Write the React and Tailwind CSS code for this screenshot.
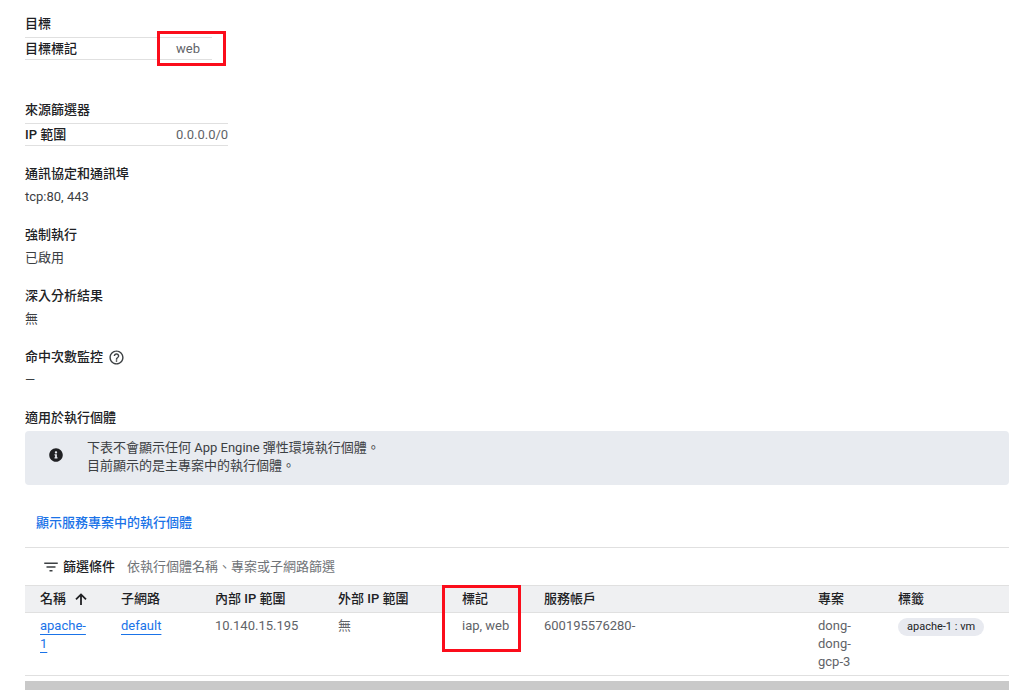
import React from "react";
import { MdHelpOutline, MdFilterList } from "react-icons/md";
import { FaInfoCircle } from "react-icons/fa";

function PropertyTable({ title, label, value, width, highlighted }) {
  return (
    <section>
      <h2 className="font-medium">{title}</h2>
      <table className={`${width} mt-1 table-fixed border-y border-[#e0e0e0]`}>
        <tbody>
          <tr>
            <th scope="row" className="h-[22px] w-[151px] p-0 text-left font-medium">
              {label}
            </th>
            <td className="relative p-0 text-[#5f6368]">
              {value}
              {highlighted && (
                <span className="absolute -top-[7px] -left-[19px] h-[35px] w-[69px] border-3 border-[#fb0d1b]" />
              )}
            </td>
          </tr>
        </tbody>
      </table>
    </section>
  );
}

function Field({ title, value, help }) {
  return (
    <div>
      <dt className="flex items-center font-medium">
        {title}
        {help && (
          <button type="button" aria-label="說明" className="ml-[5px] text-[#3c4043]">
            <MdHelpOutline size={17} />
          </button>
        )}
      </dt>
      <dd className="mt-[5px] text-[#3c4043]">{value}</dd>
    </div>
  );
}

function SortArrow() {
  return (
    <svg
      aria-hidden="true"
      className="h-3 w-3"
      viewBox="0 0 12 12"
      fill="none"
      stroke="currentColor"
      strokeWidth="1.8"
    >
      <path d="M6 12V1.4M1 6.4 6 1.4l5 5" />
    </svg>
  );
}

const columns = [
  { title: "名稱", width: "w-[81px]", sorted: true },
  { title: "子網路", width: "w-[94px]" },
  { title: "內部 IP 範圍", width: "w-[123px]" },
  { title: "外部 IP 範圍", width: "w-[124px]" },
  { title: "標記", width: "w-[82px]", highlighted: true },
  { title: "服務帳戶", width: "w-auto" },
  { title: "專案", width: "w-[80px]" },
  { title: "標籤", width: "w-[126px]" },
];

const linkStyle = "text-[#1a73e8] underline decoration-1 underline-offset-4";

function InstancesTable() {
  return (
    <table className="w-full table-fixed text-left">
      <thead>
        <tr className="h-[27px] border-y border-[#e0e0e0] bg-[#eff0f2]">
          {columns.map((c) => (
            <th key={c.title} scope="col" className={`${c.width} relative py-0 pr-0 pl-[15px] font-medium`}>
              <span className="flex items-center gap-[9px]">
                {c.title}
                {c.sorted && <SortArrow />}
              </span>
              {c.highlighted && (
                <span className="absolute -top-px -left-[5px] h-[67px] w-[79px] border-3 border-[#fb0d1b]" />
              )}
            </th>
          ))}
        </tr>
      </thead>
      <tbody>
        <tr className="border-b border-[#e0e0e0] align-top text-[#5f6368] [&>td]:pt-1 [&>td]:pb-1 [&>td]:pl-[15px]">
          <td className="pr-5">
            <a href="#apache-1" className={linkStyle}>apache-1</a>
          </td>
          <td>
            <a href="#default" className={linkStyle}>default</a>
          </td>
          <td>10.140.15.195</td>
          <td>無</td>
          <td>iap, web</td>
          <td>600195576280-</td>
          <td className="pr-7">dong-dong-gcp-3</td>
          <td>
            <span className="inline-block rounded-full bg-[#e8eaf0] px-[9px] text-[11px] leading-[18px] text-[#202124]">
              apache-1 : vm
            </span>
          </td>
        </tr>
      </tbody>
    </table>
  );
}

export default function App() {
  return (
    <main className="bg-white pt-[15px] pr-[15px] pb-[10px] pl-[25px] font-['Roboto','Noto_Sans_CJK_TC',sans-serif] text-[13px] leading-[18px] text-[#202124]">
      <div className="flex flex-col gap-[41px]">
        <PropertyTable title="目標" label="目標標記" value="web" width="w-[187px]" highlighted />
        <PropertyTable title="來源篩選器" label="IP 範圍" value="0.0.0.0/0" width="w-[203px]" />
      </div>

      <dl className="mt-[19px] flex flex-col gap-5">
        <Field title="通訊協定和通訊埠" value="tcp:80, 443" />
        <Field title="強制執行" value="已啟用" />
        <Field title="深入分析結果" value="無" />
        <Field title="命中次數監控" value="—" help />
      </dl>

      <section className="mt-5">
        <h2 className="font-medium">適用於執行個體</h2>
        <div className="mt-1 flex items-center gap-6 rounded-sm bg-[#e8ebf0] pt-2 pb-[10px] pl-6 text-[#3c4043]">
          <FaInfoCircle size={14} className="mb-1 text-[#202124]" />
          <p>
            下表不會顯示任何 App Engine 彈性環境執行個體。
            <br />
            目前顯示的是主專案中的執行個體。
          </p>
        </div>

        <button type="button" className="mt-[29px] ml-[11px] block font-medium text-[#1a73e8]">
          顯示服務專案中的執行個體
        </button>

        <div className="mt-[15px] flex h-[38px] items-center border-t border-[#e0e0e0] pl-[17px]">
          <MdFilterList size={18} className="text-[#3c4043]" />
          <label htmlFor="filter" className="ml-[3px] font-medium">篩選條件</label>
          <input
            id="filter"
            type="text"
            placeholder="依執行個體名稱、專案或子網路篩選"
            className="ml-3 min-w-0 flex-1 outline-none placeholder:text-[#6f7377]"
          />
        </div>

        <InstancesTable />
        <div className="mt-[5px] h-[9px] bg-[#c9c9c9]" />
      </section>
    </main>
  );
}
